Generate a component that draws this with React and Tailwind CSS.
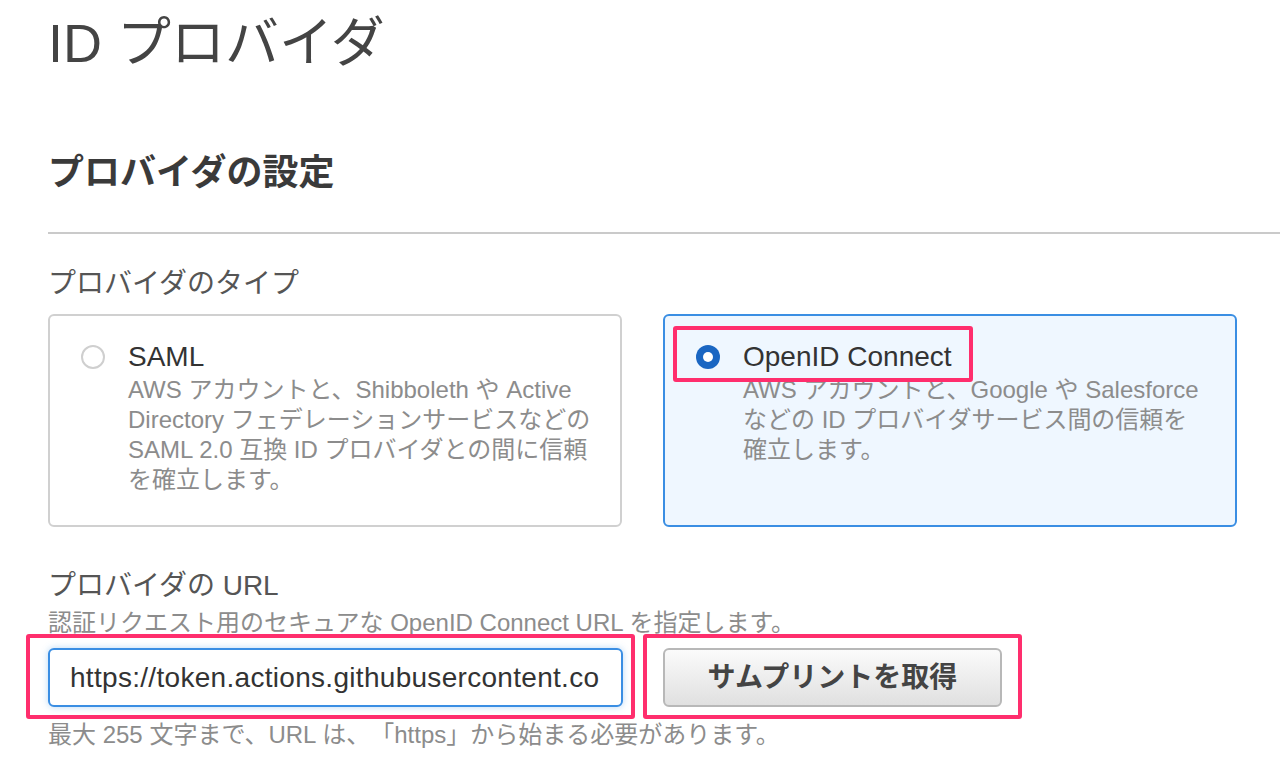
import React from "react";

function RadioOff() {
  return <div className="mt-[6px] h-6 w-6 shrink-0 rounded-full border-2 border-[#cfcfcf] bg-white" />;
}

function RadioOn() {
  return (
    <div className="mt-[6px] flex h-6 w-6 shrink-0 items-center justify-center rounded-full bg-[#1a66c2]">
      <div className="h-[10px] w-[10px] rounded-full bg-white" />
    </div>
  );
}

export default function App() {
  return (
    <div className="h-[760px] w-[1280px] overflow-hidden bg-white pl-[48px] font-['Liberation_Sans','Noto_Sans_CJK_JP',sans-serif] [text-spacing-trim:space-all]">
      <h1 className="mt-[11px] text-[54px] leading-[64px] text-[#444]">ID プロバイダ</h1>
      <h2 className="mt-[74px] text-[36px] font-bold leading-[48px] text-[#3a3a3a]">プロバイダの設定</h2>
      <div className="mt-[35px] h-[2px] bg-[#cacaca]" />
      <div className="mt-[32px] text-[28px] leading-[36px] text-[#555]">プロバイダのタイプ</div>

      <div className="mt-[12px] grid grid-cols-[574px_574px] gap-[41px]">
        <div className="h-[213px] rounded-[6px] border-2 border-[#d0d0d0] bg-white pl-[31px] pt-[23px]">
          <div className="flex gap-[23px]">
            <RadioOff />
            <div>
              <div className="text-[28px] leading-[36px] text-[#333]">SAML</div>
              <div className="text-[24px] leading-[30px] text-[#8c8c8c]">
                AWS アカウントと、Shibboleth や Active
                <br />
                Directory フェデレーションサービスなどの
                <br />
                SAML 2.0 互換 ID プロバイダとの間に信頼
                <br />
                を確立します。
              </div>
            </div>
          </div>
        </div>

        <div className="relative h-[213px] rounded-[6px] border-2 border-[#3a8ee3] bg-[#eff7ff] pl-[31px] pt-[23px]">
          <div className="flex gap-[23px]">
            <RadioOn />
            <div>
              <div className="text-[28px] leading-[36px] text-[#333]">OpenID Connect</div>
              <div className="text-[24px] leading-[30px] text-[#8c8c8c]">
                AWS アカウントと、Google や Salesforce
                <br />
                などの ID プロバイダサービス間の信頼を
                <br />
                確立します。
              </div>
            </div>
          </div>
          <div className="absolute left-[8px] top-[10px] h-[56px] w-[300px] rounded-[3px] border-4 border-[#ff2e6d]" />
        </div>
      </div>

      <div className="mt-[41px] text-[28px] leading-[36px] text-[#555]">プロバイダの URL</div>
      <div className="mt-[4px] text-[24px] leading-[30px] text-[#8c8c8c]">
        認証リクエスト用のセキュアな OpenID Connect URL を指定します。
      </div>

      <div className="mt-[10px] flex gap-[40px]">
        <div className="relative">
          <input
            readOnly
            value="https://token.actions.githubusercontent.com"
            className="h-[59px] w-[575px] rounded-[6px] border-2 border-[#3a8ee3] bg-white pl-[20px] pr-[21px] text-[28px] tracking-[0.3px] text-[#333] shadow-[0_0_7px_rgba(58,142,227,0.35)] outline-none"
          />
          <div className="pointer-events-none absolute left-[-22px] top-[-14px] h-[85px] w-[609px] rounded-[3px] border-4 border-[#ff2e6d]" />
        </div>
        <div className="relative">
          <div className="flex h-[59px] w-[339px] items-center justify-center rounded-[6px] border-2 border-[#b8b8b8] bg-gradient-to-b from-[#fbfbfb] to-[#e0e0e0] text-[28px] font-bold text-[#444]">
            サムプリントを取得
          </div>
          <div className="pointer-events-none absolute left-[-20px] top-[-14px] h-[85px] w-[379px] rounded-[3px] border-4 border-[#ff2e6d]" />
        </div>
      </div>

      <div className="mt-[13px] text-[24px] leading-[30px] text-[#8c8c8c]">
        最大 255 文字まで、URL は、「https」から始まる必要があります。
      </div>
    </div>
  );
}
